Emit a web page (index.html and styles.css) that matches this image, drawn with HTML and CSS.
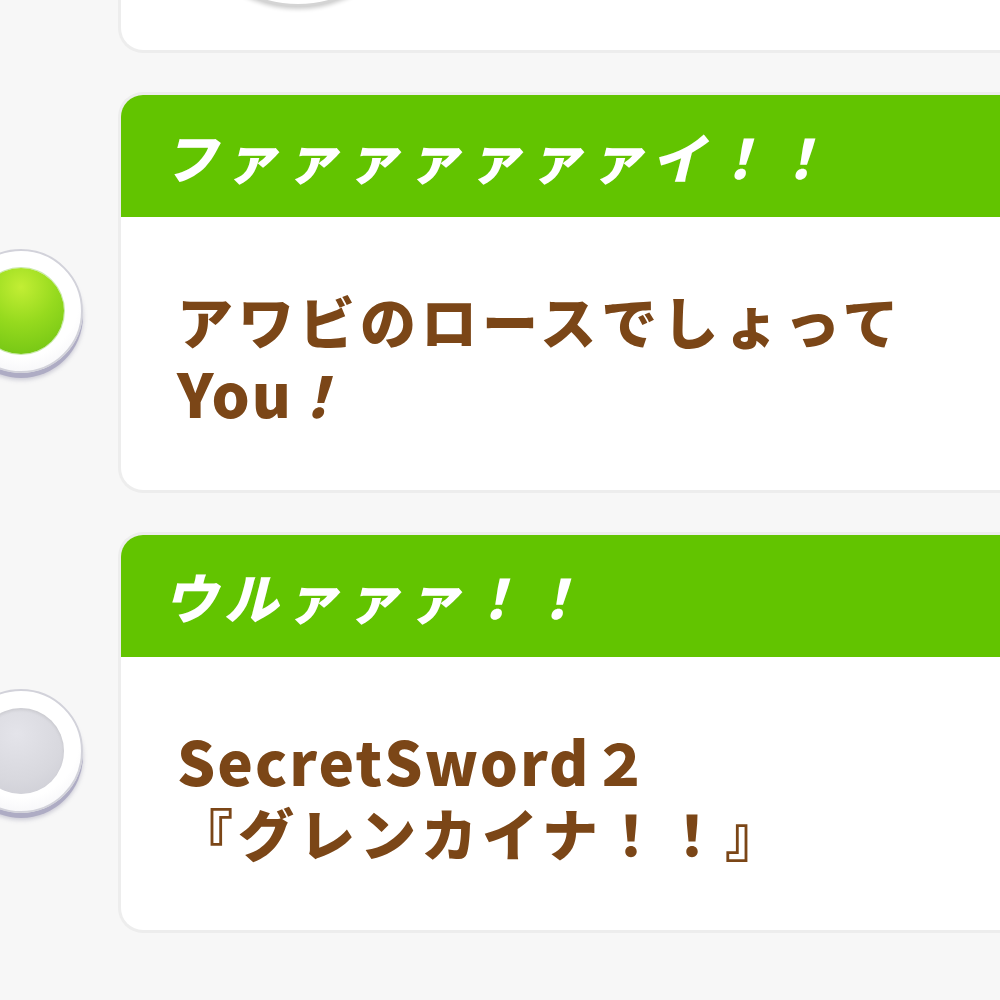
FILE: index.html
```html
<!DOCTYPE html>
<html lang="ja">
<head>
<meta charset="utf-8">
<link rel="stylesheet" href="styles.css">
</head>
<body>
<div class="list">
  <div class="row row-top">
    <div class="card card-top">
      <div class="thumb"></div>
    </div>
  </div>

  <div class="row">
    <div class="radio checked"><span class="dot"></span></div>
    <div class="card">
      <div class="card-head"><span class="head-text">ファァァァァァァイ！！</span></div>
      <div class="card-body">
        <div class="answer">
          <span class="line">アワビのロースでしょって</span>
          <span class="line"><span class="latin">You</span><span class="ex">！</span></span>
        </div>
      </div>
    </div>
  </div>

  <div class="row">
    <div class="radio"><span class="dot"></span></div>
    <div class="card">
      <div class="card-head"><span class="head-text">ウルァァァ！！</span></div>
      <div class="card-body">
        <div class="answer">
          <span class="line"><span class="latin">SecretSword</span><span class="num">２</span></span>
          <span class="line">『グレンカイナ！！』</span>
        </div>
      </div>
    </div>
  </div>
</div>
</body>
</html>
```

FILE: styles.css
```css
html, body {
  margin: 0;
  padding: 0;
  background: #f7f7f7;
  overflow: hidden;
  width: 1000px;
  height: 1000px;
}

.list {
  display: flex;
  flex-direction: column;
  gap: 45px;
  margin-top: -150px;
  font-family: "Noto Sans CJK JP", "Noto Sans", sans-serif;
}

.row {
  display: flex;
  align-items: center;
  margin-right: -60px;
}

.row-top {
  padding-left: 121px;
}

.radio {
  flex: 0 0 auto;
  width: 124px;
  height: 124px;
  margin-left: -41px;
  margin-right: 38px;
  margin-top: 36px;
  border-radius: 50%;
  box-sizing: border-box;
  background: radial-gradient(circle at 50% 40%, #ffffff 62%, #ededf2 100%);
  border: 2px solid #d2d2da;
  box-shadow: 0 5px 0 #aeacc4, 0 7px 4px rgba(120, 118, 150, 0.35);
  display: flex;
  align-items: center;
  justify-content: center;
}

.dot {
  width: 86px;
  height: 86px;
  border-radius: 50%;
  background: radial-gradient(circle at 45% 30%, #e4e4ea 0%, #d8d8de 60%, #cbcbd3 100%);
  box-shadow: inset 0 2px 3px rgba(0, 0, 0, 0.08);
}

.radio.checked .dot {
  background: radial-gradient(circle at 50% 22%, #c2ee34 0%, #96da1e 45%, #6cc112 100%);
  box-shadow: 0 0 0 1px rgba(100, 190, 20, 0.35);
}

.card {
  flex: 1 1 auto;
  display: flex;
  flex-direction: column;
  border-radius: 22px;
  overflow: hidden;
  background: #ffffff;
  box-shadow: 0 0 0 3px #ededed;
}

.card-top {
  height: 200px;
  box-sizing: border-box;
  justify-content: flex-end;
  padding: 0 0 43px 57px;
}

.thumb {
  width: 240px;
  height: 240px;
  flex: 0 0 auto;
  border-radius: 50%;
  background: #ffffff;
  border: 3px solid #d4d4d4;
  box-shadow: 0 2px 4px rgba(0, 0, 0, 0.2);
  box-sizing: border-box;
}

.card-head {
  height: 122px;
  background: #62c400;
  display: flex;
  align-items: center;
  padding-left: 42px;
}

.head-text {
  color: #ffffff;
  font-size: 54px;
  font-weight: 900;
  font-style: italic;
  letter-spacing: 7px;
  line-height: 1;
}

.card-body {
  height: 273px;
  box-sizing: border-box;
  display: flex;
  align-items: center;
  padding-left: 56px;
}

.answer {
  display: flex;
  flex-direction: column;
  gap: 6px;
  margin-top: 4px;
  color: #7b4617;
  font-size: 56px;
  font-weight: 900;
  letter-spacing: 5px;
}

.line {
  display: block;
  height: 66px;
  line-height: 66px;
  white-space: nowrap;
}

.latin {
  font-size: 60px;
  letter-spacing: 2px;
}

.num {
  margin-left: 2px;
}

.ex {
  font-style: italic;
  margin-left: -4px;
}
```
